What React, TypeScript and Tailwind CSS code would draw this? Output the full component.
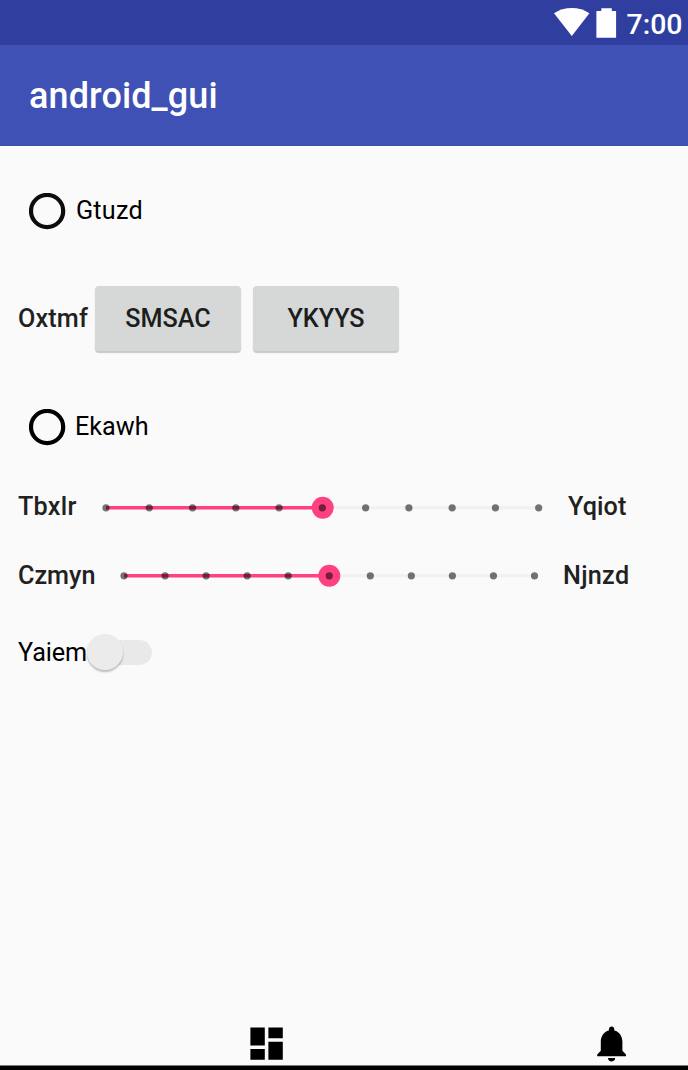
import type { ReactNode } from "react";

function StatusBar() {
  return (
    <div className="flex h-[45px] shrink-0 items-start justify-end bg-[#303f9f] text-white">
      <svg className="mt-2 h-7 w-9" viewBox="0 0 36 28" fill="currentColor">
        <path d="M0 5.200C5.200 1.800 11.400 0 17.800 0s12.400 1.800 17.600 5.200L17.800 28z" />
      </svg>
      <svg className="mt-2 ml-[6px] h-[30px] w-[21px]" viewBox="0 0 21 30" fill="currentColor">
        <path d="M5.300 0.300h10.500v2.800h4.300v26.600H0.400V3.100h4.900z" />
      </svg>
      <span className="mt-2 mr-[5.500px] ml-[9.500px] text-[28.400px] leading-[34px] font-medium">7:00</span>
    </div>
  );
}

function Label({ children, className = "" }: { children: ReactNode; className?: string }) {
  return <span className={`shrink-0 text-[25.2px] leading-[30px] whitespace-nowrap ${className}`}>{children}</span>;
}

function Radio({ label, ring, text }: { label: string; ring: string; text: string }) {
  return (
    <label className="flex h-[130px] items-center pl-[29px]">
      <svg className={`size-[37px] ${ring}`} viewBox="0 0 37 37" fill="none" stroke="currentColor">
        <circle cx="18.100" cy="18" r="16.100" strokeWidth="4.200" />
      </svg>
      <Label className={`text-black ${text}`}>{label}</Label>
    </label>
  );
}

function RaisedButton({ children, className = "" }: { children: ReactNode; className?: string }) {
  return (
    <button
      className={`flex h-[65px] w-[146px] items-center justify-center rounded-[4px] bg-[#d6d8d7] pt-[2px] text-[25.2px] leading-[30px] font-medium text-[#1c1d1d] shadow-[0_2px_1px_rgba(0,0,0,0.2)] ${className}`}
    >
      {children}
    </button>
  );
}

type SliderProps = { start: number; step: number; thumb: number };

function DiscreteSlider({ start, step, thumb }: SliderProps) {
  return (
    <svg className="h-6 w-[460px] shrink-0" viewBox="0 0 460 24">
      <path d={`M${start} 11.800H${start + step * 10}`} stroke="#f1f1f1" strokeWidth="3.600" />
      <path d={`M${start} 11.800H${thumb}`} stroke="#ff4081" strokeWidth="3.600" />
      <circle cx={thumb} cy="11.800" r="11" fill="#ff4081" />
      {Array.from({ length: 11 }, (_, i) => (
        <circle key={i} cx={start + step * i} cy="11.800" r="3.600" fill="#000" fillOpacity="0.54" />
      ))}
    </svg>
  );
}

export default function App() {
  return (
    <div className="flex h-[1070px] w-[688px] flex-col overflow-hidden bg-[#fafafa] font-['Roboto',sans-serif] text-[#212121]">
      <StatusBar />
      <header className="flex h-[101px] shrink-0 items-center bg-[#3f51b5] pl-[29px]">
        <h1 className="text-[36px] leading-[42px] font-medium tracking-[0.1px] text-white">android_gui</h1>
      </header>

      <main className="flex flex-1 flex-col">
        <Radio label="Gtuzd" ring="text-[#0d0d0d]" text="ml-[10px] tracking-[0.200px]" />
        <div className="flex h-[86px] items-center pl-[18px]">
          <Label className="w-[77px] font-medium tracking-[0.150px]">Oxtmf</Label>
          <div className="-mt-[2px] flex gap-3">
            <RaisedButton>SMSAC</RaisedButton>
            <RaisedButton className="tracking-[-0.100px]">YKYYS</RaisedButton>
          </div>
        </div>
        <Radio label="Ekawh" ring="text-black" text="ml-[9px]" />
        <div className="flex h-[31px] items-center pl-[18px]">
          <Label className="-mt-[2px] w-[78px] font-medium tracking-[0.250px]">Tbxlr</Label>
          <DiscreteSlider start={10} step={43.27} thumb={226.7} />
          <Label className="-mt-[2px] ml-[12px] font-medium tracking-[0.100px]">Yqiot</Label>
        </div>
        <div className="flex h-[106px] items-center pl-[18px]">
          <Label className="w-[96px] font-medium">Czmyn</Label>
          <DiscreteSlider start={10} step={41.05} thumb={215.3} />
          <Label className="-ml-[11px] font-medium tracking-[0.300px]">Njnzd</Label>
        </div>
        <label className="flex h-[46px] items-center pl-[18px]">
          <Label className="mt-[2px] w-[69px] tracking-[-0.100px] text-black">Yaiem</Label>
          <span className="ml-[5px] flex h-[25px] w-[60px] items-center rounded-full bg-[#e9e9e9]">
            <span className="-ml-[5px] size-9 rounded-full bg-[#ebebeb] shadow-[0_2px_2px_rgba(0,0,0,0.25)]" />
          </span>
        </label>
      </main>

      <nav className="flex h-[43px] shrink-0 items-start justify-between pr-[54.500px] pl-[244.600px]">
        <svg className="size-[43.200px]" viewBox="0 0 24 24">
          <path d="M3 13h8V3H3v10zm0 8h8v-6H3v6zm10 0h8V11h-8v10zm0-18v6h8V3h-8z" />
        </svg>
        <svg className="size-[43.200px]" viewBox="0 0 24 24">
          <path d="M12 22c1.100 0 2-.9 2-2h-4c0 1.100.89 2 2 2zm6-6v-5c0-3.070-1.640-5.640-4.500-6.320V4c0-.83-.67-1.500-1.500-1.500s-1.500.67-1.500 1.500v.68C7.630 5.360 6 7.920 6 11v5l-2 2v1h16v-1l-2-2z" />
        </svg>
      </nav>
      <div className="h-[5px] shrink-0 border-t border-[#777] bg-black" />
    </div>
  );
}
